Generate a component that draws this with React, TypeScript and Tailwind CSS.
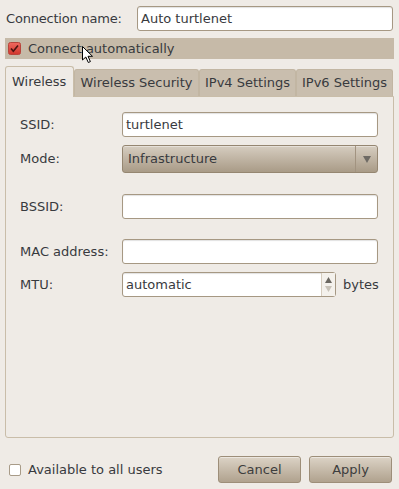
import React from "react";

const field =
  "h-[25px] w-[256px] rounded-[3px] border border-[#a69883] bg-white px-[3px] flex items-center shadow-[inset_0_1px_1px_rgba(0,0,0,0.12)]";
const btn =
  "h-[27px] w-[83px] rounded-[3px] border border-[#9d8e79] bg-gradient-to-b from-[#dcd3c6] to-[#b0a28e] flex items-center justify-center text-[#3d3d3d] shadow-[inset_0_1px_0_rgba(255,255,255,0.45)]";
const tab =
  "h-[27px] rounded-t-[3px] border border-b-0 border-[#c2b6a3] bg-[#c9beae] flex items-center justify-center";

function Cursor() {
  return (
    <svg
      className="absolute left-[81px] top-[45px]"
      width="13"
      height="19"
      viewBox="0 0 13 19"
    >
      <path
        d="M1.5 1.5 L1.5 15 L4.8 12 L7.3 17.5 L9.4 16.6 L7 11.3 L11.5 11.3 Z"
        fill="#fff"
        stroke="#000"
        strokeWidth="1"
        strokeLinejoin="round"
      />
    </svg>
  );
}

function Row({ label, className, children }: { label: string; className?: string; children: React.ReactNode }) {
  return (
    <div className={"flex items-center " + (className ?? "")}>
      <div className="w-[102px]">{label}</div>
      {children}
    </div>
  );
}

export default function App() {
  return (
    <div
      className="relative w-[399px] h-[489px] bg-[#efebe6] text-[13px] text-[#383a3e] overflow-hidden"
      style={{ fontFamily: '"DejaVu Sans", "Liberation Sans", sans-serif' }}
    >
      {/* connection name */}
      <div className="flex items-center pt-[6px]">
        <div className="w-[137px] pl-[6px] tracking-[-0.2px]">Connection name:</div>
        <div className={field}>Auto turtlenet</div>
      </div>

      {/* connect automatically */}
      <div className="mx-[5px] mt-[7px] h-[21px] bg-[#c6baa8] flex items-center gap-[7px] pl-[3px]">
        <svg width="13" height="13" viewBox="0 0 13 13">
          <defs>
            <linearGradient id="red" x1="0" y1="0" x2="0" y2="1">
              <stop offset="0" stopColor="#f0695f" />
              <stop offset="1" stopColor="#d0362c" />
            </linearGradient>
          </defs>
          <rect x="0.5" y="0.5" width="12" height="12" rx="2" fill="url(#red)" stroke="#b8443b" />
          <path d="M3 6.5 L5.3 9.2 L10 3.4" fill="none" stroke="#4a1410" strokeWidth="1.6" />
        </svg>
        <span>Connect automatically</span>
      </div>

      {/* tabs */}
      <div className="mx-[5px] mt-[7px] flex items-end">
        <div className="relative z-10 -mb-px h-[31px] w-[69px] rounded-t-[3px] border border-b-0 border-[#c9bda9] bg-[#efebe6] flex items-center pl-[6px]">
          Wireless
        </div>
        <div className={tab + " w-[125px]"}>Wireless Security</div>
        <div className={tab + " w-[97px]"}>IPv4 Settings</div>
        <div className={tab + " w-[97px]"}>IPv6 Settings</div>
      </div>

      {/* page */}
      <div className="mx-[5px] h-[342px] rounded-b-[3px] border border-[#c9bda9] bg-[#efebe6] pl-[14px] pt-[15px]">
        <Row label="SSID:">
          <div className={field}>turtlenet</div>
        </Row>
        <Row label="Mode:" className="mt-[8px]">
          <div className="h-[28px] w-[256px] rounded-[3px] border border-[#958671] bg-gradient-to-b from-[#d6cdc0] to-[#a99b87] flex items-center shadow-[inset_0_1px_0_rgba(255,255,255,0.4)]">
            <span className="flex-1 pl-[5px]">Infrastructure</span>
            <span className="h-full w-[22px] border-l border-[#a29380] flex items-center justify-center">
              <svg width="8" height="7" viewBox="0 0 8 7">
                <path d="M0 0 H8 L4 7 Z" fill="#6e6a64" />
              </svg>
            </span>
          </div>
        </Row>
        <Row label="BSSID:" className="mt-[21px]">
          <div className={field}></div>
        </Row>
        <Row label="MAC address:" className="mt-[20px]">
          <div className={field}></div>
        </Row>
        <Row label="MTU:" className="mt-[8px]">
          <div className="h-[25px] w-[214px] rounded-[3px] border border-[#a69883] bg-white flex shadow-[inset_0_1px_1px_rgba(0,0,0,0.12)]">
            <span className="flex-1 flex items-center pl-[3px]">automatic</span>
            <span className="w-[14px] border-l border-[#d6cdbf] bg-[#f4f1ec] flex flex-col items-center justify-around py-[2px]">
              <svg width="7" height="6" viewBox="0 0 7 6">
                <path d="M3.5 0 L7 6 H0 Z" fill="#6b6761" />
              </svg>
              <svg width="7" height="6" viewBox="0 0 7 6">
                <path d="M0 0 H7 L3.5 6 Z" fill="#c8c2b8" />
              </svg>
            </span>
          </div>
          <span className="ml-[7px]">bytes</span>
        </Row>
      </div>

      {/* bottom */}
      <div className="mt-[18px] flex items-center pl-[9px] pr-[7px]">
        <div className="h-[12px] w-[12px] rounded-[2px] border border-[#a89b88] bg-white" />
        <span className="ml-[7px] flex-1">Available to all users</span>
        <div className={btn}>Cancel</div>
        <div className={btn + " ml-[8px]"}>Apply</div>
      </div>

      <Cursor />
    </div>
  );
}
